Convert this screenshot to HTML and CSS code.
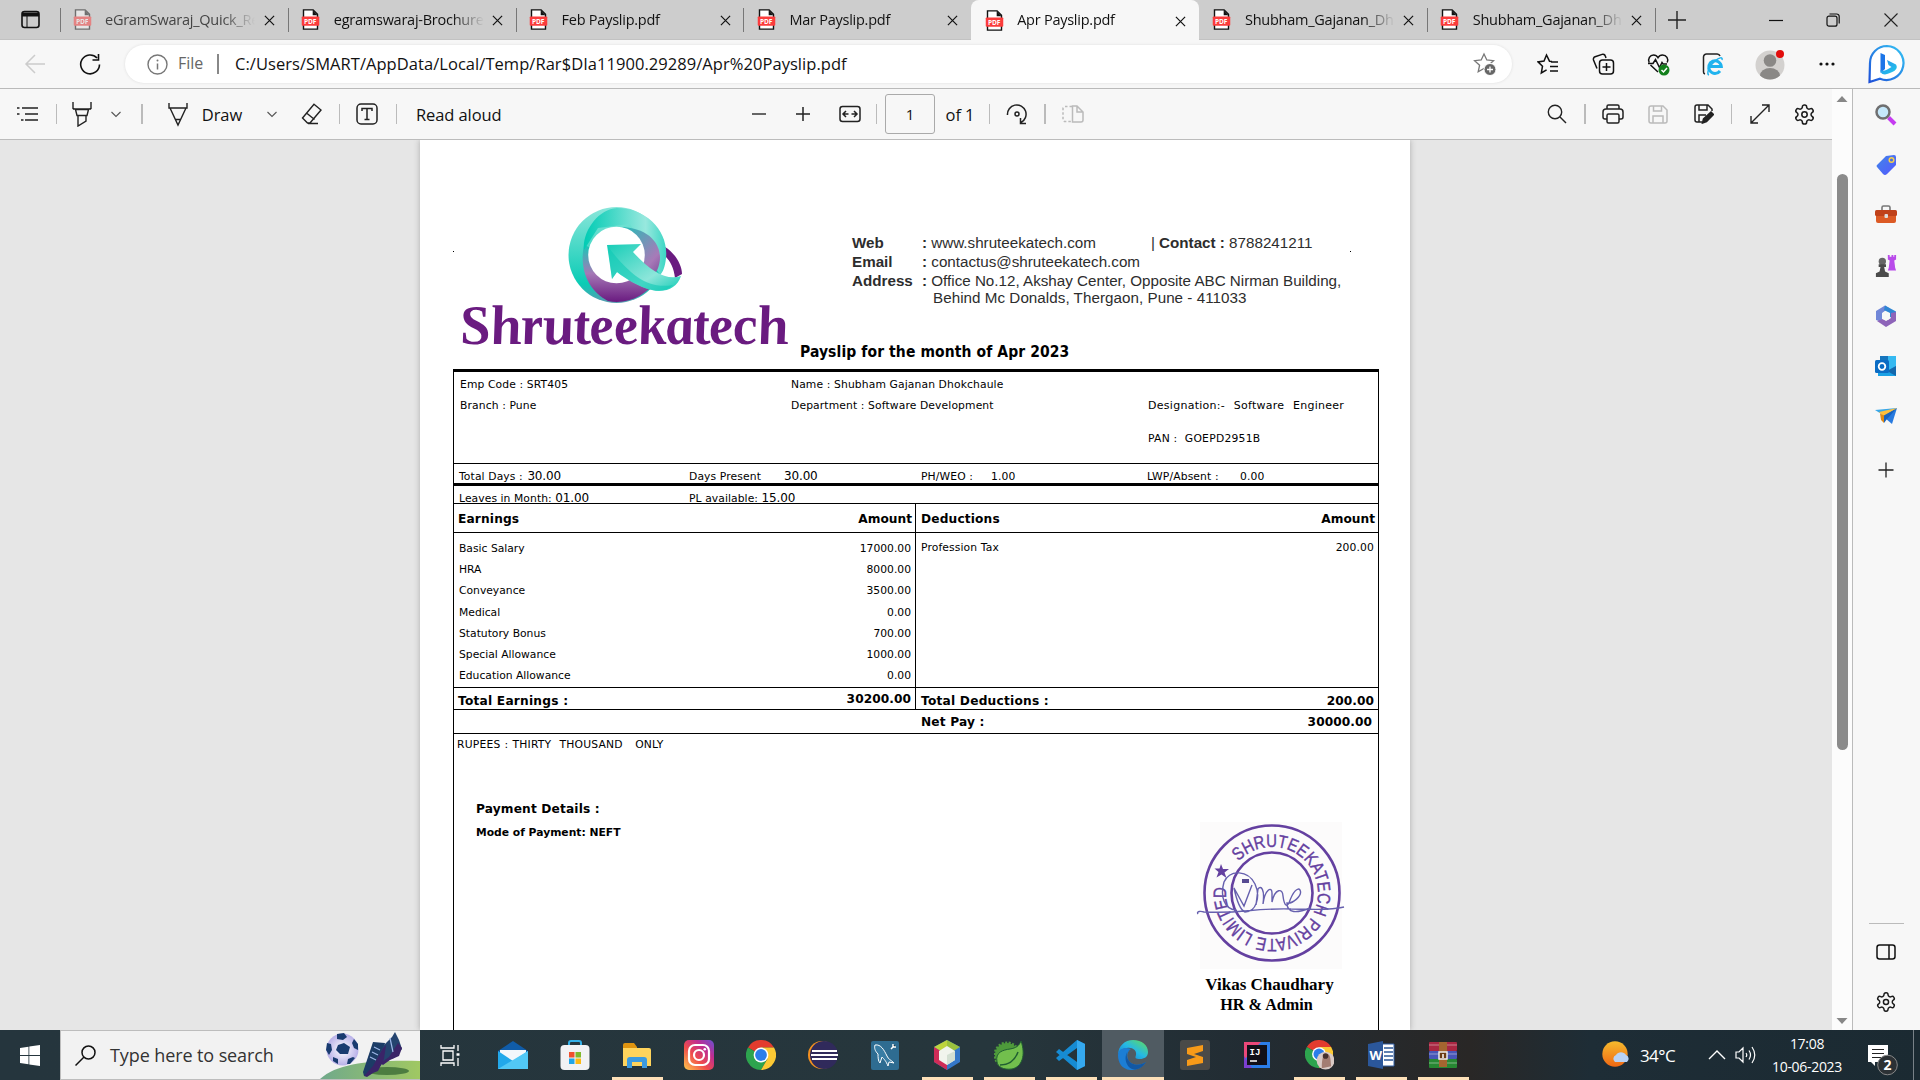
FILE: index.html
```html
<!DOCTYPE html>
<html lang="en">
<head>
<meta charset="utf-8">
<title>Apr Payslip.pdf</title>
<link rel="stylesheet" href="styles.css">
</head>
<body>
<svg class="defs" width="0" height="0" aria-hidden="true">
  <symbol id="pdf" viewBox="0 0 20 24">
    <path d="M2 1h11l5 5v17H2z" fill="#fff" stroke="#111" stroke-width="1.6"/>
    <path d="M12.500 1v6H18z" fill="#111"/>
    <rect x="0" y="8.500" width="20" height="10.500" rx="1" fill="#fb3c3c"/>
    <text x="2.700" y="16.600" font-family="Open Sans, sans-serif" font-weight="700" font-size="7.500" fill="#fff">PDF</text>
  </symbol>
  <symbol id="x" viewBox="0 0 12 12"><path d="M1 1l10 10M11 1L1 11" stroke="#111" stroke-width="1.300" fill="none"/></symbol>
  <symbol id="chev" viewBox="0 0 12 8"><path d="M1.500 2l4.500 4.500L10.500 2" stroke="#555" stroke-width="1.100" fill="none"/></symbol>
  <symbol id="gear" viewBox="0 0 24 24"><g fill="none" stroke="#1b1b1b" stroke-width="1.600"><path d="M12.220 2h-.44a2 2 0 0 0-2 2v.18a2 2 0 0 1-1 1.730l-.43.25a2 2 0 0 1-2 0l-.15-.08a2 2 0 0 0-2.730.730l-.22.38a2 2 0 0 0 .73 2.730l.15.1a2 2 0 0 1 1 1.720v.51a2 2 0 0 1-1 1.740l-.15.09a2 2 0 0 0-.73 2.730l.22.38a2 2 0 0 0 2.730.730l.15-.08a2 2 0 0 1 2 0l.43.25a2 2 0 0 1 1 1.730V20a2 2 0 0 0 2 2h.44a2 2 0 0 0 2-2v-.18a2 2 0 0 1 1-1.730l.43-.25a2 2 0 0 1 2 0l.15.08a2 2 0 0 0 2.730-.73l.22-.39a2 2 0 0 0-.73-2.730l-.15-.08a2 2 0 0 1-1-1.740v-.5a2 2 0 0 1 1-1.740l.15-.09a2 2 0 0 0 .73-2.730l-.22-.38a2 2 0 0 0-2.730-.73l-.15.08a2 2 0 0 1-2 0l-.43-.25a2 2 0 0 1-1-1.730V4a2 2 0 0 0-2-2z"/><circle cx="12" cy="12" r="2.800"/></g></symbol>
  <symbol id="chrome" viewBox="0 0 30 30">
    <path d="M15 15L2 7.500A15 15 0 0 1 28 7.500H15z" fill="#e33b2e"/>
    <path d="M15 15L2 7.500A15 15 0 0 0 15 30l6.500-11.200z" fill="#2da44e"/>
    <path d="M15 30A15 15 0 0 0 28 7.500H15L21.500 18.800z" fill="#fcc934"/>
    <circle cx="15" cy="15" r="7.400" fill="#fff"/><circle cx="15" cy="15" r="5.900" fill="#2b7de9"/>
  </symbol>
</svg>

<div class="browser">
  <div class="tabstrip">
    <div class="tab-menu"><svg width="19" height="19" viewBox="0 0 19 19"><rect x="1" y="1.500" width="17" height="16" rx="2.500" fill="none" stroke="#111" stroke-width="1.600"/><path d="M1 2.500h17v4H1z" fill="#111"/><path d="M6 6v11" stroke="#111"/></svg></div>
    <div class="tab sleeping"><svg class="pdf"><use href="#pdf"/></svg><span>eGramSwaraj_Quick_Ref</span><svg class="close"><use href="#x"/></svg></div>
    <div class="tab"><svg class="pdf"><use href="#pdf"/></svg><span>egramswaraj-Brochure.</span><svg class="close"><use href="#x"/></svg></div>
    <div class="tab"><svg class="pdf"><use href="#pdf"/></svg><span>Feb Payslip.pdf</span><svg class="close"><use href="#x"/></svg></div>
    <div class="tab"><svg class="pdf"><use href="#pdf"/></svg><span>Mar Payslip.pdf</span><svg class="close"><use href="#x"/></svg></div>
    <div class="tab active"><svg class="pdf"><use href="#pdf"/></svg><span>Apr Payslip.pdf</span><svg class="close"><use href="#x"/></svg></div>
    <div class="tab first-after"><svg class="pdf"><use href="#pdf"/></svg><span>Shubham_Gajanan_Dh</span><svg class="close"><use href="#x"/></svg></div>
    <div class="tab"><svg class="pdf"><use href="#pdf"/></svg><span>Shubham_Gajanan_Dh</span><svg class="close"><use href="#x"/></svg></div>
    <div class="new-tab"><svg width="18" height="18" viewBox="0 0 18 18"><path d="M9 0v18M0 9h18" stroke="#222" stroke-width="1.400"/></svg></div>
    <div class="win-controls">
      <svg width="14" height="14" viewBox="0 0 14 14"><path d="M0 7.500h14" stroke="#111" stroke-width="1.200"/></svg>
      <svg width="14" height="14" viewBox="0 0 14 14" fill="none" stroke="#111" stroke-width="1.200"><rect x="1" y="3.200" width="10" height="10" rx="2"/><path d="M3.500 1h7.200a2.500 2.500 0 0 1 2.500 2.500v7"/></svg>
      <svg width="14" height="14" viewBox="0 0 14 14"><path d="M.5.5l13 13M13.500.5l-13 13" stroke="#222" stroke-width="1.100"/></svg>
    </div>
  </div>

  <div class="navbar">
    <svg width="22" height="20" viewBox="0 0 22 20" fill="none" stroke="#ccc" stroke-width="1.500"><path d="M11 1L2 10l9 9M2 10h19"/></svg>
    <svg class="reload" width="22" height="22" viewBox="0 0 22 22" fill="none" stroke="#111" stroke-width="1.600"><path d="M20.500 11.500A9.400 9.400 0 1 1 18 5M19.500 1v6h-6"/></svg>
    <div class="omnibox">
      <svg class="info" width="21" height="21" viewBox="0 0 21 21"><circle cx="10.500" cy="10.500" r="9.500" fill="none" stroke="#777" stroke-width="1.400"/><path d="M10.500 9.500v6" stroke="#777" stroke-width="1.500"/><circle cx="10.500" cy="6.500" r="1" fill="#777"/></svg>
      <span class="scheme">File</span><span class="bar"></span><span class="url">C:/Users/SMART/AppData/Local/Temp/Rar$DIa11900.29289/Apr%20Payslip.pdf</span>
      <svg class="star" width="24" height="24" viewBox="0 0 24 24"><path d="M11 2l2.800 6 6.700.7-5 4.500 1.400 6.500L11 16.500 5.200 19.800l1.400-6.600-5-4.500L8.200 8z" fill="none" stroke="#777" stroke-width="1.300"/><circle cx="17" cy="17.500" r="6" fill="#666" stroke="#fff"/><path d="M17 14.500v6M14 17.500h6" stroke="#fff" stroke-width="1.300"/></svg>
    </div>
    <i></i>
    <svg width="22" height="22" viewBox="0 0 22 22" fill="none" stroke="#111" stroke-width="1.500"><path d="M15 8.500l-2.500-.3L9.500 2 7 8l-6 .9 4.500 4.300L4.300 20l5.300-3.200M14 9h7M13 13.500h8M13 18h8"/></svg>
    <svg width="23" height="23" viewBox="0 0 23 23" fill="none" stroke="#111" stroke-width="1.500"><path d="M5 15.500L1.500 7a2.500 2.500 0 0 1 1.600-3.200l7-2.400a2.500 2.500 0 0 1 3.200 1.600l.7 2"/><rect x="7.500" y="7" width="14" height="14" rx="3"/><path d="M14.500 10v8M10.500 14h8"/></svg>
    <svg width="23" height="23" viewBox="0 0 23 23" fill="none" stroke="#111" stroke-width="1.500"><path d="M11 19L3.500 12M2.200 9.500C.5 6 3 2 6.500 2c2 0 3.500 1 4.500 2.700C12 3 13.500 2 15.500 2c4 0 6.400 4 4.700 7.500M1 10.500h5l2.500-4 4 8 2.500-5 1 1.500h4"/><circle cx="17" cy="17" r="5.500" fill="#13801c" stroke="none"/><path d="M14.500 17l2 2 3.500-4" stroke="#fff"/></svg>
    <svg width="22" height="23" viewBox="0 0 22 23"><path d="M3 21a2 2 0 0 1-1.500-2V4a3 3 0 0 1 3-3H15a3 3 0 0 1 3 2" fill="none" stroke="#222" stroke-width="1.500"/><path d="M18 18a6.300 6.300 0 1 1 1.300-4.500H8" fill="none" stroke="#20b3ee" stroke-width="3"/><path d="M7 22c-3-1 0-9 6-14 4-3.500 8-4.500 7-1" fill="none" stroke="#20b3ee" stroke-width="1.500"/></svg>
    <svg width="30" height="34" viewBox="0 0 30 34"><circle cx="15" cy="18" r="14.500" fill="#d3d1cf"/><circle cx="15" cy="13.500" r="6.300" fill="#8a8886"/><path d="M5 28.500a10 7.500 0 0 1 20 0 14.500 14.500 0 0 1-20 0z" fill="#8a8886"/><circle cx="25" cy="7" r="4" fill="#e20c0c"/></svg>
    <svg width="18" height="6" viewBox="0 0 18 6" fill="#111"><circle cx="3" cy="3" r="1.600"/><circle cx="9" cy="3" r="1.600"/><circle cx="15" cy="3" r="1.600"/></svg>
    <svg width="38" height="40" viewBox="0 0 38 40"><defs><linearGradient id="bg1" x1="1" y1="0" x2="0" y2="1"><stop offset="0" stop-color="#35c4f4"/><stop offset="1" stop-color="#1c4fd8"/></linearGradient><linearGradient id="bg2" x1="0" y1="0" x2="1" y2="1"><stop offset="0" stop-color="#2a8df0"/><stop offset="1" stop-color="#22cbe8"/></linearGradient></defs><path d="M19 2a17 17 0 1 1-7 32.700L1.500 38 2 19A17 17 0 0 1 19 2z" fill="#fff" stroke="url(#bg1)" stroke-width="2.200"/><path d="M12.500 9l4.500 2v14l-4.500 4z" fill="#1c75e8"/><path d="M19 16l9 4.500c3 5-3 8-11 10-4 0-4.500-3-4.500-4.500 3 2 6 0 11-3l-3-2z" fill="url(#bg2)"/></svg>
  </div>

  <div class="body">
    <div class="viewer">
      <div class="toolbar">
        <svg width="22" height="18" viewBox="0 0 22 18" stroke="#222" stroke-width="1.500"><path d="M5 3h16M8 9h13M8 15h13M0 3h2.500M0 9h2.500M4 15h2.500"/></svg>
        <i class="sep"></i>
        <svg width="20" height="26" viewBox="0 0 20 26" fill="none" stroke="#222" stroke-width="1.400"><path d="M1 1v6.500l3 1h12l3-1V1M1 8h18M3.500 8.500l1.500 6h10l1.500-6M6 14.500V25l8-5v-5.500"/></svg>
        <svg width="12" height="8"><use href="#chev"/></svg>
        <i class="sep wide"></i>
        <svg width="20" height="26" viewBox="0 0 20 26" fill="none" stroke="#222" stroke-width="1.400"><path d="M1 2v5h18V2M2 7l8 17 8-17M7 18.500h6"/></svg>
        <span>Draw</span>
        <svg width="12" height="8"><use href="#chev"/></svg>
        <svg width="22" height="24" viewBox="0 0 22 24" fill="none" stroke="#222" stroke-width="1.400"><path d="M13 2.200L20 8 9 21H6.500L1.500 16zM5.500 11l8 6.500M7 21.500h10"/></svg>
        <i class="sep"></i>
        <svg width="22" height="22" viewBox="0 0 22 22" fill="none" stroke="#222" stroke-width="1.500"><rect x="1" y="1" width="20" height="20" rx="4"/><path d="M6 8V5.500h10V8M11 5.500v11M8.500 16.500h5"/></svg>
        <i class="sep"></i>
        <span class="read">Read aloud</span>
        <svg width="14" height="14" viewBox="0 0 14 14"><path d="M0 7h14" stroke="#666" stroke-width="2"/></svg>
        <svg width="14" height="14" viewBox="0 0 14 14"><path d="M0 7h14M7 0v14" stroke="#222" stroke-width="1.500"/></svg>
        <svg width="22" height="18" viewBox="0 0 22 18" fill="none" stroke="#222" stroke-width="1.500"><rect x="1" y="1.500" width="20" height="15" rx="2.500"/><path d="M9.500 9H4M7 6L4 9l3 3M12.500 9H18M15 6l3 3-3 3"/></svg>
        <i class="sep"></i>
        <b class="pageno">1</b>
        <span>of 1</span>
        <i class="sep"></i>
        <svg width="22" height="22" viewBox="0 0 22 22" fill="none" stroke="#222" stroke-width="1.500"><path d="M1.500 12A9.300 9.300 0 1 1 15 19.500M20 20.500h-5.500V15"/><circle cx="11" cy="11" r="2"/></svg>
        <i class="sep wide"></i>
        <svg width="22" height="18" viewBox="0 0 22 18" fill="none" stroke="#bbb" stroke-width="1.500"><path d="M10.500 1v16H19a2 2 0 0 0 2-2V7l-6-6zM15 1v6h6"/><path d="M10 1.500H3a2 2 0 0 0-2 2v11a2 2 0 0 0 2 2h7" stroke-dasharray="2.500 2"/></svg>
        <i></i>
        <svg width="20" height="20" viewBox="0 0 20 20" fill="none" stroke="#222" stroke-width="1.400"><circle cx="8" cy="8" r="6.700"/><path d="M13 13l6 6"/></svg>
        <i class="sep wide"></i>
        <svg width="22" height="20" viewBox="0 0 22 20" fill="none" stroke="#222" stroke-width="1.500"><path d="M5 5V2.500A1.500 1.500 0 0 1 6.500 1h9A1.500 1.500 0 0 1 17 2.500V5M5 15H3a2 2 0 0 1-2-2V8a3 3 0 0 1 3-3h14a3 3 0 0 1 3 3v5a2 2 0 0 1-2 2h-2"/><rect x="5" y="10" width="12" height="9" rx="1.500"/></svg>
        <svg width="20" height="19" viewBox="0 0 20 19" fill="none" stroke="#bbb" stroke-width="1.500"><path d="M1 3a2 2 0 0 1 2-2h12l4 4v11a2 2 0 0 1-2 2H3a2 2 0 0 1-2-2zM5.500 1v5h8V1M5 18v-7h10v7"/></svg>
        <svg width="20" height="20" viewBox="0 0 20 20" fill="none" stroke="#222" stroke-width="1.500"><path d="M8 18H3a2 2 0 0 1-2-2V3a2 2 0 0 1 2-2h11l4 4v2M5 1v5h8V1M5 18v-7h7"/><path d="M8.500 19l1-4L17 8l2.500 2.500-7 7z" fill="#222"/></svg>
        <i class="sep"></i>
        <svg width="20" height="20" viewBox="0 0 20 20" fill="none" stroke="#222" stroke-width="1.400"><path d="M12 1h7v7M19 1L1 19M1 12v7h7"/></svg>
        <svg width="23" height="23"><use href="#gear"/></svg>
      </div>

      <div class="canvas">
        <div class="page">
          <div class="letterhead">
            <i class="dot"></i>
            <svg class="logo" width="340" height="152" viewBox="456 200 340 152">
              <defs>
                <linearGradient id="l2" x1="0" y1="0" x2="0" y2="1"><stop offset="0" stop-color="#15c9b8"/><stop offset=".5" stop-color="#a578b6"/><stop offset="1" stop-color="#6a1b80"/></linearGradient>
                <linearGradient id="l3" x1="0" y1="0" x2="1" y2="1"><stop offset="0" stop-color="#15cdb7"/><stop offset=".65" stop-color="#8de6da"/><stop offset="1" stop-color="#10cbb5"/></linearGradient>
                <linearGradient id="l4" x1="0" y1="0" x2="0" y2="1"><stop offset="0" stop-color="#8be6da"/><stop offset=".8" stop-color="#0accb5"/><stop offset="1" stop-color="#5a9bb0"/></linearGradient>
                <linearGradient id="l5" x1="0" y1="0" x2="1" y2="0"><stop offset="0" stop-color="#00ccb4"/><stop offset=".3" stop-color="#3bd6c4"/><stop offset=".75" stop-color="#98e8de"/><stop offset="1" stop-color="#3bd6c4"/></linearGradient>
                <linearGradient id="l6" x1="0" y1="0" x2="1" y2="1"><stop offset="0" stop-color="#15c4b6"/><stop offset=".75" stop-color="#a87ab8"/><stop offset="1" stop-color="#7d4f9a"/></linearGradient>
              </defs>
              <path d="M665 247c10 6 17 18 17 27l-7 4c-1-10-5-17-9-21z" fill="#6a1b80"/>
              <circle cx="616.500" cy="255" r="48" fill="url(#l4)"/>
              <path d="M584 245c-5 24 4 46 24 56 20 4 38-6 48-20l-14-12-58-24z" fill="url(#l2)"/>
              <path d="M584 250c-2-18 14-41 33-42 30 0 52 24 49 50-1 9-3 14-6 17l-30-51-32 4z" fill="url(#l5)"/>
              <path d="M617 227c20-1 42 8 43 30 0 8-3 14-6 19l-16-8z" fill="url(#l6)"/>
              <circle cx="616.500" cy="255" r="28.300" fill="#fff"/>
              <path d="M607 245l34-1-8 8c18 20 34 29 48 24-4 12-15 17-29 14-13-3-26-11-35-18l-5 7z" fill="url(#l3)"/>
              <path d="M608 247c20 25 38 43 65 38-6 6-13 7-21 5-13-3-26-11-35-18l-5 7z" fill="#10cab5" opacity=".6"/>
              <text transform="translate(462 343.500) skewX(8)" class="logo-text" textLength="329" lengthAdjust="spacing">Shruteekatech</text>
            </svg>
            <dl class="contact">
              <dt>Web</dt><dd><b>:</b> www.shruteekatech.com<span class="phone">| <b>Contact :</b> 8788241211</span></dd>
              <dt>Email</dt><dd><b>:</b> contactus@shruteekatech.com</dd>
              <dt>Address</dt><dd><b>:</b> Office No.12, Akshay Center, Opposite ABC Nirman Building,</dd>
              <dd class="cont">Behind Mc Donalds, Thergaon, Pune - 411033</dd>
            </dl>
            <i class="dot"></i>
          </div>
          <h1>Payslip for the month of Apr 2023</h1>
          <div class="slip">
            <div class="employee">
              <span>Emp Code : SRT405</span><span>Name : Shubham Gajanan Dhokchaule</span><span></span>
              <span>Branch : Pune</span><span>Department : Software Development</span><span class="desig">Designation:-&nbsp; Software&nbsp; Engineer</span>
              <span class="pan">PAN :&nbsp; GOEPD2951B</span>
            </div>
            <div class="days">
              <span>Total Days : <em>30.00</em></span><span>Days Present</span><em>30.00</em><span>PH/WEO :</span><span>1.00</span><span>LWP/Absent :</span><span>0.00</span>
            </div>
            <div class="leaves"><span>Leaves in Month: <em>01.00</em></span><span>PL available: <em>15.00</em></span></div>
            <div class="cols">
              <div class="col">
                <div class="head"><b>Earnings</b><b>Amount</b></div>
                <div class="lines">
                  <div><span>Basic Salary</span><span>17000.00</span></div>
                  <div><span>HRA</span><span>8000.00</span></div>
                  <div><span>Conveyance</span><span>3500.00</span></div>
                  <div><span>Medical</span><span>0.00</span></div>
                  <div><span>Statutory Bonus</span><span>700.00</span></div>
                  <div><span>Special Allowance</span><span>1000.00</span></div>
                  <div><span>Education Allowance</span><span>0.00</span></div>
                </div>
                <div class="total"><b>Total Earnings :</b><b class="raised">30200.00</b></div>
              </div>
              <div class="col deductions">
                <div class="head"><b>Deductions</b><b>Amount</b></div>
                <div class="lines"><div><span>Profession Tax</span><span>200.00</span></div></div>
                <div class="total"><b>Total Deductions :</b><b>200.00</b></div>
              </div>
            </div>
            <div class="net"><b>Net Pay :</b><b>30000.00</b></div>
            <p class="words">RUPEES : THIRTY&nbsp; THOUSAND&nbsp;&nbsp; ONLY</p>
            <p class="pay">Payment Details :</p>
            <p class="mode">Mode of Payment: NEFT</p>
            <div class="sign">
              <svg width="154" height="148" viewBox="1196 821 154 148">
                <path d="M1200 822h142v147h-142z" fill="#fcfbfb"/>
                <circle cx="1272" cy="893" r="67.500" fill="none" stroke="#6440a0" stroke-width="2.600"/>
                <circle cx="1272" cy="893" r="40.500" fill="none" stroke="#6440a0" stroke-width="2.600"/>
                <path id="ring" d="M1238.600 861.300A46 46 0 1 1 1226.500 886" fill="none"/>
                <text class="ring-text"><textPath href="#ring" textLength="259" lengthAdjust="spacingAndGlyphs">SHRUTEEKATECH PRIVATE LIMITED</textPath></text>
                <path d="M1221 864l2 5 6 0-4.500 3.500 2 5.500-5-3.500-5 3 2-5.500-4-3.500h5z" fill="#6440a0"/>
                <path d="M1198 914c-2-3 3-3 6-2 40 2 45-4 87-3 20 0 38 2 53-2M1236 910c-12-1-16-14-12-28 6-13 24-12 31 2 6 13 1 28-10 28-5-2-8-10-11-24l10 18 8-21M1256 905l2-16c3-4 7 0 5 15 2-15 9-18 9-11l0 9c3-14 11-14 11-6 1 8 3 12 6 7 4-12 9-16 11-13 3 6-8 14-13 13 0 11 10 10 24 5" fill="none" stroke="#6660ae" stroke-width="1.400"/>
                <path d="M1242 879h7v4h-7z" fill="#574b92"/>
              </svg>
              <strong>Vikas Chaudhary</strong><strong class="role">HR &amp; Admin</strong>
            </div>
          </div>
        </div>
      </div>
    </div>
    <div class="scroll">
      <svg width="12" height="8" viewBox="0 0 12 8"><path d="M6 1l5.500 6H.5z" fill="#888"/></svg>
      <i class="thumb"></i>
      <svg class="down" width="12" height="8" viewBox="0 0 12 8"><path d="M6 7l5.500-6H.5z" fill="#888"/></svg>
    </div>
    <div class="sidebar">
      <svg viewBox="0 0 22 22"><path d="M13.500 13.500l6.500 6.500" stroke="#c53bf0" stroke-width="4"/><circle cx="8" cy="8" r="6.500" fill="#c5e8fb" stroke="#6f6f70" stroke-width="2.500"/></svg>
      <svg viewBox="0 0 22 22"><defs><linearGradient id="tg" x2="1" y2="1"><stop stop-color="#3f86e8"/><stop offset="1" stop-color="#5658ff"/></linearGradient></defs><path d="M11 2l8-1q2 0 2 2v8L12 20q-2 2-4 0l-6-7q-1-1 0-2z" fill="url(#tg)"/><circle cx="16.500" cy="6" r="2.300" fill="#4a6fe0" stroke="#f7cf4a" stroke-width="1.500"/></svg>
      <svg viewBox="0 0 22 22"><path d="M7 6V3.500q0-1.500 1.500-1.500h5Q15 2 15 3.500V6" fill="none" stroke="#777" stroke-width="1.600"/><rect x="1" y="9" width="20" height="10" rx="2" fill="#dc5a25"/><rect y="6" width="22" height="6" rx="1.500" fill="#c0411a"/><rect x="9.500" y="10" width="3.500" height="4" rx="1" fill="#ddd"/></svg>
      <svg viewBox="0 0 22 24"><path d="M13 0h2v2h2V0h2v2h1V0h2v5l-2 1 1 8 1 3h-9l1-3 1-8-2-1z" fill="#b94bea"/><circle cx="7" cy="7" r="4" fill="#666"/><path d="M3 10h8v3H9l1 5 4 2v4H0v-4l4-2 1-5H3z" fill="#4b4b4b"/></svg>
      <svg viewBox="0 0 22 22"><path d="M1 6L10 .5 14 3 7 8v9l-6-2z" fill="#7187d8"/><path d="M10 .5l11 6V15l-6-3V8L9 5z" fill="#2f86d4"/><path d="M21 7v9l-10 6-9-6 6-2 3 2 5-3V8z" fill="#8e64b9"/><circle cx="11" cy="11.200" r="4" fill="#f7f7f7"/></svg>
      <svg viewBox="0 0 22 22"><rect x="5" y="1" width="16" height="17" fill="#35b9f1"/><path d="M5 1h8v8H5z" fill="#1675bd"/><path d="M3 11l9 5 9-5v10H3z" fill="#1aa1e5"/><path d="M21 11v10l-9-5z" fill="#1467ac"/><rect y="5" width="14" height="13" rx="1.500" fill="#0b6cc4"/><circle cx="7" cy="11.500" r="3.300" fill="none" stroke="#fff" stroke-width="1.800"/></svg>
      <svg viewBox="0 0 22 22"><path d="M0 5l22-2L8 10z" fill="#38a7e8"/><path d="M22 3l-5 16-7-6z" fill="#287adf"/><path d="M22 3L8 10l1 8 3-4z" fill="#1762bd"/><path d="M4 7l18-4L8 11z" fill="#ffbf3b"/><path d="M5 8.500l4 2V18L6 15z" fill="#dd8a17"/></svg>
      <svg class="add" viewBox="0 0 22 22"><path d="M11 3.500v15M3.500 11h15" stroke="#222" stroke-width="1.300"/></svg>
      <i class="rule"></i>
      <svg viewBox="0 0 22 22" fill="none" stroke="#111" stroke-width="1.500"><rect x="2" y="4" width="18" height="14" rx="2.500"/><path d="M14 4v14"/></svg>
      <svg class="cog" viewBox="0 0 24 24"><use href="#gear"/></svg>
    </div>
  </div>
</div>

<div class="taskbar">
  <div class="start"><svg width="20" height="21" viewBox="0 0 20 21" fill="#fff"><path d="M0 3l8.500-1.200V10H0zM9.300 1.600L20 0v10H9.300zM0 11h8.500v8.200L0 18zM9.300 11H20v10L9.300 19.400z"/></svg></div>
  <div class="search"><svg width="21" height="21" viewBox="0 0 21 21" fill="none" stroke="#111" stroke-width="1.500"><circle cx="13.500" cy="7.500" r="6.500"/><path d="M9 12l-8.500 8.500"/></svg><span>Type here to search</span>
    <svg class="art" width="102" height="48" viewBox="318 1032 102 48"><defs><linearGradient id="gr" x2="1"><stop stop-color="#70a98b"/><stop offset="1" stop-color="#a0c862"/></linearGradient><radialGradient id="ba"><stop stop-color="#fff"/><stop offset="1" stop-color="#b8b0e8"/></radialGradient></defs><path d="M320 1080c18-16 50-19 100-18v18z" fill="url(#gr)"/><ellipse cx="387" cy="1072" rx="22" ry="4" fill="#4d7d40"/><circle cx="342.500" cy="1050.500" r="16" fill="url(#ba)"/><path d="M338 1046l6-2 6 4-2 7h-8l-4-4zM337 1035l7-1 3 4-4 3-6-1zM354 1040l4 5v6l-4-2-2-5zM327 1044l4 1 1 6-3 5-3-5zM333 1058l5 2v5l-5-3zM348 1060l5-2 2 1-5 6h-3z" fill="#193b70"/><path d="M363 1073l6-18 4-12 12 1-3 14-7 12-4 5-7 2z" fill="#1c3c66"/><path d="M384 1046l8-8 3-5 4 8 3 9-8 9-10 3-6 8-3-7z" fill="#24446f"/><path d="M364 1077l9-10 10-18 3-3-2 14-6 12-5 2-6 4zM380 1064l9-6 9-14 4 5-3 8-9 4-7 5z" fill="#3a2468"/><path d="M374 1048l6 3M372 1053l6 3M370 1058l6 3M390 1039l3 14" stroke="#9db7e8" stroke-width="1.200"/></svg>
  </div>
  <div class="apps">
    <div><svg viewBox="0 0 30 30" fill="none" stroke="#fff" stroke-width="1.300"><path d="M5 5v3h13V5M5 26v-3h13v3M7 11h10v9H7zM22 5v6M22 18v8"/><path d="M20.500 14.500h3" stroke-width="2.500"/></svg></div>
    <div><svg viewBox="0 0 30 30"><path d="M0 11L15 1l15 10v5H0z" fill="#105ca8"/><path d="M2 10h26v12H2z" fill="#f4f7fb"/><path d="M0 11l15 10 15-10v18H0z" fill="#22a8ea"/><path d="M0 29l30-18v18z" fill="#52c8f5"/></svg></div>
    <div><svg viewBox="0 0 30 30"><path d="M9 8V3q0-2 2-2h8q2 0 2 2v5" fill="none" stroke="#34b0e8" stroke-width="2"/><rect x=".5" y="5" width="29" height="25" rx="4" fill="#f2f2f4"/><path d="M9 12h5.500v5.500H9z" fill="#f0502d"/><path d="M15.500 12H21v5.500h-5.500z" fill="#80b92b"/><path d="M9 18.500h5.500V24H9z" fill="#20a5e8"/><path d="M15.500 18.500H21V24h-5.500z" fill="#fdb913"/></svg></div>
    <div class="open"><svg viewBox="0 0 30 30"><path d="M1 5q0-2 2-2h9l3 4v5H1z" fill="#df9410"/><path d="M1 8h26q2 0 2 2v16H1z" fill="#ffd45c"/><path d="M5 28v-8q0-3 3-3h14q3 0 3 3v8h-5v-6h-10v6z" fill="#3c9be0"/></svg></div>
    <div><svg viewBox="0 0 30 30"><defs><linearGradient id="ig" x1="0" y1="1" x2="1" y2="0"><stop stop-color="#fecb4c"/><stop offset=".4" stop-color="#f04c4b"/><stop offset=".7" stop-color="#bf2d91"/><stop offset="1" stop-color="#6753d5"/></linearGradient></defs><rect width="30" height="30" rx="5" fill="url(#ig)"/><g fill="none" stroke="#fff" stroke-width="2.200"><rect x="5" y="5" width="20" height="20" rx="6"/><circle cx="15" cy="15" r="5"/></g><circle cx="20.800" cy="9.200" r="1.300" fill="#fff"/></svg></div>
    <div><svg viewBox="0 0 30 30"><use href="#chrome"/></svg></div>
    <div><svg viewBox="0 0 30 30"><circle cx="14" cy="15" r="14" fill="#f39020"/><circle cx="16" cy="15" r="14" fill="#302a5b"/><path d="M4 11h25M3 15h27M4 19h25" stroke="#fff" stroke-width="2"/></svg></div>
    <div><svg viewBox="0 0 30 30"><rect x="1" y="1" width="28" height="29" rx="2" fill="#2e6c91"/><path d="M5 5c6-1 9 5 12 11 1 3 4 4 7 7l-5-1-1 4c-2-5-4-7-6-9l-2 6c-2-2-2-6-2-9C5 11 4 8 5 5z" fill="#397da4" stroke="#fff" stroke-width="1"/><path d="M21 9l3-3M23 4v3h3" stroke="#fff" stroke-width="1.500"/></svg></div>
    <div class="open"><svg viewBox="0 0 30 30"><path d="M15 0l13 7v15l-13 8L2 22V7z" fill="#3477c8"/><path d="M2 7L15 0v15z" fill="#bed43c"/><path d="M15 0l13 7-13 8z" fill="#9bc13d"/><path d="M2 7l13 8v15L2 22z" fill="#cf2c57"/><path d="M15 6l8 5v9l-8 5-8-5v-9z" fill="#f1f4ed"/><path d="M15 15l8-4v9l-8 5z" fill="#d3dfd2"/></svg></div>
    <div class="open"><svg viewBox="0 0 30 30"><circle cx="13" cy="15" r="12" fill="#4e9a3b" stroke="#4e9a3b" stroke-width="3" stroke-dasharray="2 1.400"/><path d="M27 1c5 14 1 26-9 28-9 1-14-2-15-7-2-10 6-12 13-13 6-1 9-3 11-8z" fill="#72bf4d" stroke="#205e32" stroke-width="1"/><path d="M6 25c9 0 15-5 18-13" stroke="#205e32" stroke-width="1.500" fill="none"/></svg></div>
    <div class="open"><svg viewBox="0 0 30 30"><path d="M21 0l8 4v22l-8 4L0 12l3-3 18 13V8L3 21l-3-3z" fill="#168bd3"/><path d="M21 0l8 4v22l-8 4z" fill="#35a9ef"/></svg></div>
    <div class="open active"><svg viewBox="0 0 30 30"><defs><linearGradient id="ed" x1="0" y1="1" x2="1" y2="0"><stop stop-color="#1472c9"/><stop offset=".5" stop-color="#25b8e6"/><stop offset="1" stop-color="#66df53"/></linearGradient></defs><path d="M15 0c9 0 15 5 15 12 0 5-4 7-8 7-5 0-5-1-4-4 1-5-4-8-9-7-5 0-8 4-9 7C0 6 7 0 15 0z" fill="url(#ed)"/><path d="M0 15C1 8 7 7 13 9c-5 3-5 10 0 14 5 3 10 2 15-1-6 9-14 8-16 8C4 29 0 23 0 15z" fill="#1c7ed4"/><path d="M12 9c-5 3-4 10 1 14 5 3 10 2 15-1-5 8-12 8-14 7C7 26 5 14 12 9z" fill="#1258a4"/></svg></div>
    <div><svg viewBox="0 0 30 30"><rect width="30" height="30" rx="3" fill="#4a4a48"/><path d="M23 5v6l-9 3 9 3v6L7 26v-6l9-3-9-3V8z" fill="#f89a18"/></svg></div>
    <div><svg viewBox="0 0 30 30"><path d="M2 2h26v26H2z" fill="#2b7de8"/><path d="M2 2h17L2 20z" fill="#ea4879"/><path d="M2 16l8 12H2z" fill="#7b3fd0"/><rect x="5" y="5" width="20" height="20" fill="#111018"/><text x="7.500" y="15" class="ij">IJ</text><path d="M8 21h7" stroke="#fff" stroke-width="1.500"/></svg></div>
    <div class="open"><svg viewBox="0 0 30 32"><use href="#chrome" width="30" height="30"/><circle cx="22" cy="22" r="9.500" fill="#d9cac5"/><path d="M18 30c0-9 1-15 5-15 5 0 4 6 5 13z" fill="#a37d72"/><circle cx="22" cy="17" r="3" fill="#45312e"/></svg></div>
    <div class="open"><svg viewBox="0 0 30 30"><path d="M15 4h13v22H15z" fill="#fff" stroke="#315fa4"/><path d="M18 8h9M18 12h9M18 16h9M18 20h9" stroke="#2b5797" stroke-width="1.500"/><path d="M2 4l15-3v28L2 26z" fill="#2b579a"/><text x="3.500" y="20" class="word" textLength="12">W</text></svg></div>
    <div class="open"><svg viewBox="0 0 30 30"><rect x="1" y="2" width="28" height="9" rx="1" fill="#a92742"/><rect x="1" y="11" width="28" height="8" rx="1" fill="#4856b8"/><rect x="1" y="19" width="28" height="9" rx="1" fill="#278833"/><path d="M1 5h28M1 14h28M1 23h28" stroke="#eee" opacity=".45"/><path d="M11 2h8v25h-8z" fill="#a56530"/><path d="M11 12h8v7h-8z" fill="#6b3b15" stroke="#eee" stroke-width="1.500"/><path d="M15 14v4" stroke="#fff" stroke-width="1.500"/></svg></div>
  </div>
  <div class="tray">
    <svg width="30" height="28" viewBox="0 0 30 28"><defs><linearGradient id="su" x2="0" y2="1"><stop stop-color="#f6ba2d"/><stop offset="1" stop-color="#ef6814"/></linearGradient></defs><circle cx="13" cy="13" r="12.700" fill="url(#su)"/><path d="M13 21a4 4 0 0 1 1-7 6 6 0 0 1 10 0 4 4 0 0 1 1 7z" fill="#b9d2f4"/></svg>
    <span class="temp">34°C</span>
    <svg class="up" width="18" height="10" viewBox="0 0 18 10"><path d="M1 9l8-8 8 8" fill="none" stroke="#fff" stroke-width="1.400"/></svg>
    <svg class="vol" width="22" height="18" viewBox="0 0 22 18" fill="none" stroke="#fff" stroke-width="1.200"><path d="M1 6h3l4-4v14l-4-4H1zM11 7q1.500 2 0 4M14 4.500q3 4.500 0 9M17 1q5.500 8 0 16"/></svg>
    <div class="clock"><span>17:08</span><span>10-06-2023</span></div>
    <div class="notice"><svg width="31" height="32" viewBox="0 0 31 32"><path d="M0 1h20v17H7l0 4-4-4H0z" fill="#fff"/><path d="M4 5.500h12M4 9.500h12M4 13.500h12" stroke="#222" stroke-width="1"/><circle cx="19.500" cy="21" r="9.800" fill="#2c3135" stroke="#888"/><text x="19.500" y="26" text-anchor="middle" class="badge">2</text></svg></div>
  </div>
</div>
</body>
</html>
```
FILE: styles.css
```css
* { box-sizing: border-box; }
body { margin: 0; width: 1920px; height: 1080px; overflow: hidden; font-family: "Open Sans", "Noto Sans", sans-serif; color: #111; background: #f7f7f7; }
svg { display: block; flex: none; }
.defs { position: absolute; }
i, em { font-style: normal; }
.browser { height: 1030px; display: flex; flex-direction: column; }

/* tabs */
.tabstrip { height: 40px; background: #cdcdcd; display: flex; border-bottom: 1px solid #c2c2c2; }
.tab-menu { width: 60px; display: grid; place-items: center; }
.tab { width: 227.8px; display: flex; align-items: center; padding-left: 13.500px; font-size: 14.500px; letter-spacing: -.25px; background: linear-gradient(#777, #777) left 8px / 1px 24px no-repeat; }
.tab span { width: 153px; margin: 0 0 1px 13.500px; white-space: nowrap; -webkit-mask-image: linear-gradient(90deg, #000 118px, transparent 150px); mask-image: linear-gradient(90deg, #000 118px, transparent 150px); }
.tab .pdf { width: 19px; height: 21px; }
.tab .close { width: 11px; height: 11px; margin-left: 5px; margin-top: 2px; }
.sleeping { padding-left: 12.500px; }
.sleeping .pdf { opacity: .5; }
.sleeping span { color: #444; }
.sleeping .close { margin-left: 6px; }
.tab.active { background: #f7f7f7; border-radius: 8px 8px 0 0; height: 40px; }
.tab.first-after { background: none; }
.new-tab { width: 45px; display: grid; place-items: center; background: linear-gradient(#777, #777) left 8px / 1px 24px no-repeat; }
.win-controls { margin-left: auto; width: 173px; display: grid; grid-template-columns: repeat(3, 1fr); place-items: center; }

/* address bar */
.navbar { height: 49px; padding: 0 0 0 8px; border-bottom: 1px solid #bababa; display: grid; grid-template-columns: 54px 63px 1387px 8px 56px 55px 54px 55px 60px 54px 66px; align-items: center; justify-items: center; }
.reload { margin-right: 7px; }
.omnibox { width: 1387px; height: 38px; border-radius: 19px; background: #fff; box-shadow: 0 0 3px #ddd; display: flex; align-items: center; padding: 0 15px 0 22px; font-size: 16.500px; }
.scheme { margin: 0 0 2px 10px; color: #666; width: 39px; font-size: 16px; }
.bar { width: 2px; height: 20px; background: #888; margin-right: 16px; }
.url { white-space: nowrap; letter-spacing: .05px; margin-bottom: 2px; }
.star { margin-left: auto; }

/* viewer */
.body { flex: 1; min-height: 0; display: grid; grid-template-columns: 1832px 21px 67px; }
.viewer { display: flex; flex-direction: column; min-height: 0; }
.toolbar { height: 51px; border-bottom: 1px solid #bcbcbc; padding-left: 8px; font-size: 16.500px; letter-spacing: -.1px; white-space: nowrap; display: grid; align-items: center; justify-items: center;
  grid-template-columns: 40px 16px 35px 33px 20px 51px 38px 62px 18px 36px 20px 39px 324px 38px 50px 43px 11px 56px 44px 14px 42px 14px 42px 444px 38px 18px 38px 52px 40px 14px 43px 46px; }
.sep { width: 1px; height: 20px; background: #bbb; }
.sep.wide { width: 2px; }
.read { justify-self: start; }
.pageno { width: 50px; height: 40px; border: 1px solid #aaa; border-radius: 3px; display: grid; place-items: center; font-weight: 400; font-size: 15px; }
.canvas { flex: 1; min-height: 0; overflow: hidden; background: #e6e6e6; display: flex; padding-left: 420px; }
.page { width: 990px; background: #fff; box-shadow: 0 0 6px #aaa; padding: 60px 32px 0 33px; color: #000; font-family: "DejaVu Sans", sans-serif; }
.letterhead { display: flex; height: 152px; }
.dot { width: 1px; height: 1px; background: #000; margin-top: 51px; }
.logo { margin-left: 2px; }
.logo-text { font: italic bold 56px "Liberation Serif", serif; fill: #6a1b80; }
.contact { margin: 33px 0 0 56px; width: 498px; display: grid; grid-template-columns: 70px 1fr; grid-template-rows: 19px 19px 18px 17px; font: 15.200px/19px "Liberation Sans", sans-serif; color: #2d2d2d; white-space: nowrap; }
.contact dt { font-weight: bold; }
.contact dd { margin: 0; }
.contact .cont { grid-column: 2; padding-left: 11px; line-height: 18px; letter-spacing: .04px; }
.phone { margin-left: 55px; }
h1 { margin: -9px 0 0 347px; height: 26px; font: bold 15.500px/18px "DejaVu Sans Condensed", "DejaVu Sans", sans-serif; letter-spacing: .1px; white-space: nowrap; }

/* payslip table */
.slip { border: 1px solid #000; border-top-width: 3px; height: 720px; width: 926px; font-size: 10.750px; line-height: 16px; white-space: nowrap; }
.slip b { font-size: 12.200px; letter-spacing: .15px; }
.employee { height: 91px; padding: 5px 0 0 6px; letter-spacing: .12px; display: grid; grid-template-columns: 331px 357px 1fr; grid-template-rows: 21px 33px 20px; }
.desig { font-size: 11px; letter-spacing: .28px; word-spacing: .5px; }
.pan { grid-column: 3; letter-spacing: .25px; }
.days { height: 23px; border-top: 1px solid #000; border-bottom: 3px solid #000; padding: 4px 0 0 5px; letter-spacing: .12px; display: grid; align-items: baseline; grid-template-columns: 230px 95px 137px 70px 156px 93px 1fr; }
.slip em { font-size: 12px; letter-spacing: -.15px; }
.days span em { margin-left: 1px; }
.leaves { height: 17px; overflow: hidden; padding: 4px 0 0 5px; letter-spacing: .08px; display: grid; grid-template-columns: 230px 1fr; }
.cols { border-top: 1px solid #000; border-bottom: 1px solid #000; height: 207px; display: grid; grid-template-columns: 461px 1fr; }
.deductions { border-left: 1px solid #000; }
.col > div, .lines > div { display: flex; justify-content: space-between; }
.head { height: 29px; border-bottom: 1px solid #000; padding: 7px 3px 0 4px; }
.slip .head b:last-child { letter-spacing: 0; }
.col .lines { display: block; height: 154px; padding: 8px 4px 0 5px; }
.lines > div { height: 21.200px; }
.total { height: 22px; border-top: 1px solid #000; padding: 5px 4px 0 4px; }
.slip .total b:first-child { letter-spacing: .22px; }
.slip .total b:last-child, .slip .net b:last-child { letter-spacing: .05px; }
.total .raised { margin-top: -2px; }
.deductions .head, .deductions .total { padding-left: 5px; }
.deductions .lines { padding-top: 7px; letter-spacing: .12px; }
.net { height: 23px; display: flex; justify-content: space-between; padding: 4px 6px 0 467px; }
.slip p { margin: 0; }
.words { border-top: 1px solid #000; padding: 3px 0 0 3px; letter-spacing: .2px; word-spacing: .5px; }
.slip .pay { margin: 48px 0 0 22px; font-weight: bold; font-size: 12.200px; letter-spacing: .15px; }
.slip .mode { margin: 8px 0 0 22px; font-weight: bold; font-size: 10.750px; }
.sign { margin: -20px 0 0 742px; width: 154px; display: flex; flex-direction: column; align-items: center; }
.sign strong { font: bold 17px/20px "Liberation Serif", serif; margin-left: -7px; }
.sign .role { font-size: 16.200px; margin-left: -13px; }
.sign svg { margin-bottom: 6px; }
.ring-text { font: 18px "Liberation Sans Narrow", "Liberation Sans", sans-serif; fill: #6440a0; stroke: #6440a0; stroke-width: .4px; }

/* scrollbar and sidebar */
.scroll { background: #fcfcfc; border-right: 1px solid #bbb; display: flex; flex-direction: column; align-items: center; padding: 6px 0 5px; }
.thumb { width: 11px; height: 576px; border-radius: 6px; background: #8b8b8b; margin-top: 71px; }
.down { margin-top: auto; }
.sidebar { display: flex; flex-direction: column; align-items: center; padding-top: 15px; padding-right: 1px; }
.sidebar svg { width: 22px; height: 22px; margin-bottom: 28.200px; }
.sidebar .add { margin-top: 4px; }
.rule { width: 35px; height: 1px; background: #bbb; margin-top: auto; margin-bottom: 17px; }
.sidebar .cog { margin-bottom: 17px; }

/* taskbar */
.taskbar { height: 50px; display: flex; color: #fff; background: linear-gradient(90deg, #25353d 0, #26363c 1000px, #222c33 1250px, #292726 1470px, #1e2d36 1590px, #1b2a32 1920px); }
.start { width: 60px; display: grid; place-items: center; }
.search { width: 360px; background: #f2f2f2; border: 1px solid #bdbdbd; border-width: 1px 0 1px 1px; display: flex; align-items: center; padding-left: 14px; color: #333; font-size: 18px; letter-spacing: -.1px; }
.search span { margin-left: 14px; margin-top: -1px; white-space: nowrap; }
.art { margin-left: auto; }
.apps { display: grid; grid-template-columns: repeat(17, 62px); width: 1054px; }
.apps > div { display: grid; place-items: center; width: 62px; background: linear-gradient(#fde0b8, #fde0b8) center bottom / 0 3px no-repeat; }
.apps > .open { background-size: 51px 3px; }
.apps > .active { background-color: #505b62; background-size: 100% 3px; }
.apps svg { width: 30px; height: 30px; }
.ij { font: bold 9px "Liberation Mono", monospace; fill: #fff; }
.word { font: bold 13px "Open Sans", sans-serif; fill: #fff; }
.tray { flex: 1; display: flex; align-items: center; padding-left: 128px; }
.temp { font-size: 17px; letter-spacing: -.6px; margin-left: 8px; width: 68px; }
.up { width: 18px; }
.vol { margin-left: 9px; }
.clock { width: 90px; margin-left: 5px; display: flex; flex-direction: column; align-items: center; font-size: 14px; line-height: 23px; letter-spacing: -.3px; }
.notice { margin-left: 16px; width: 46px; height: 50px; border-right: 1px solid #788187; padding-top: 14px; }
.badge { font: bold 14px "Open Sans", sans-serif; fill: #fff; }
```
